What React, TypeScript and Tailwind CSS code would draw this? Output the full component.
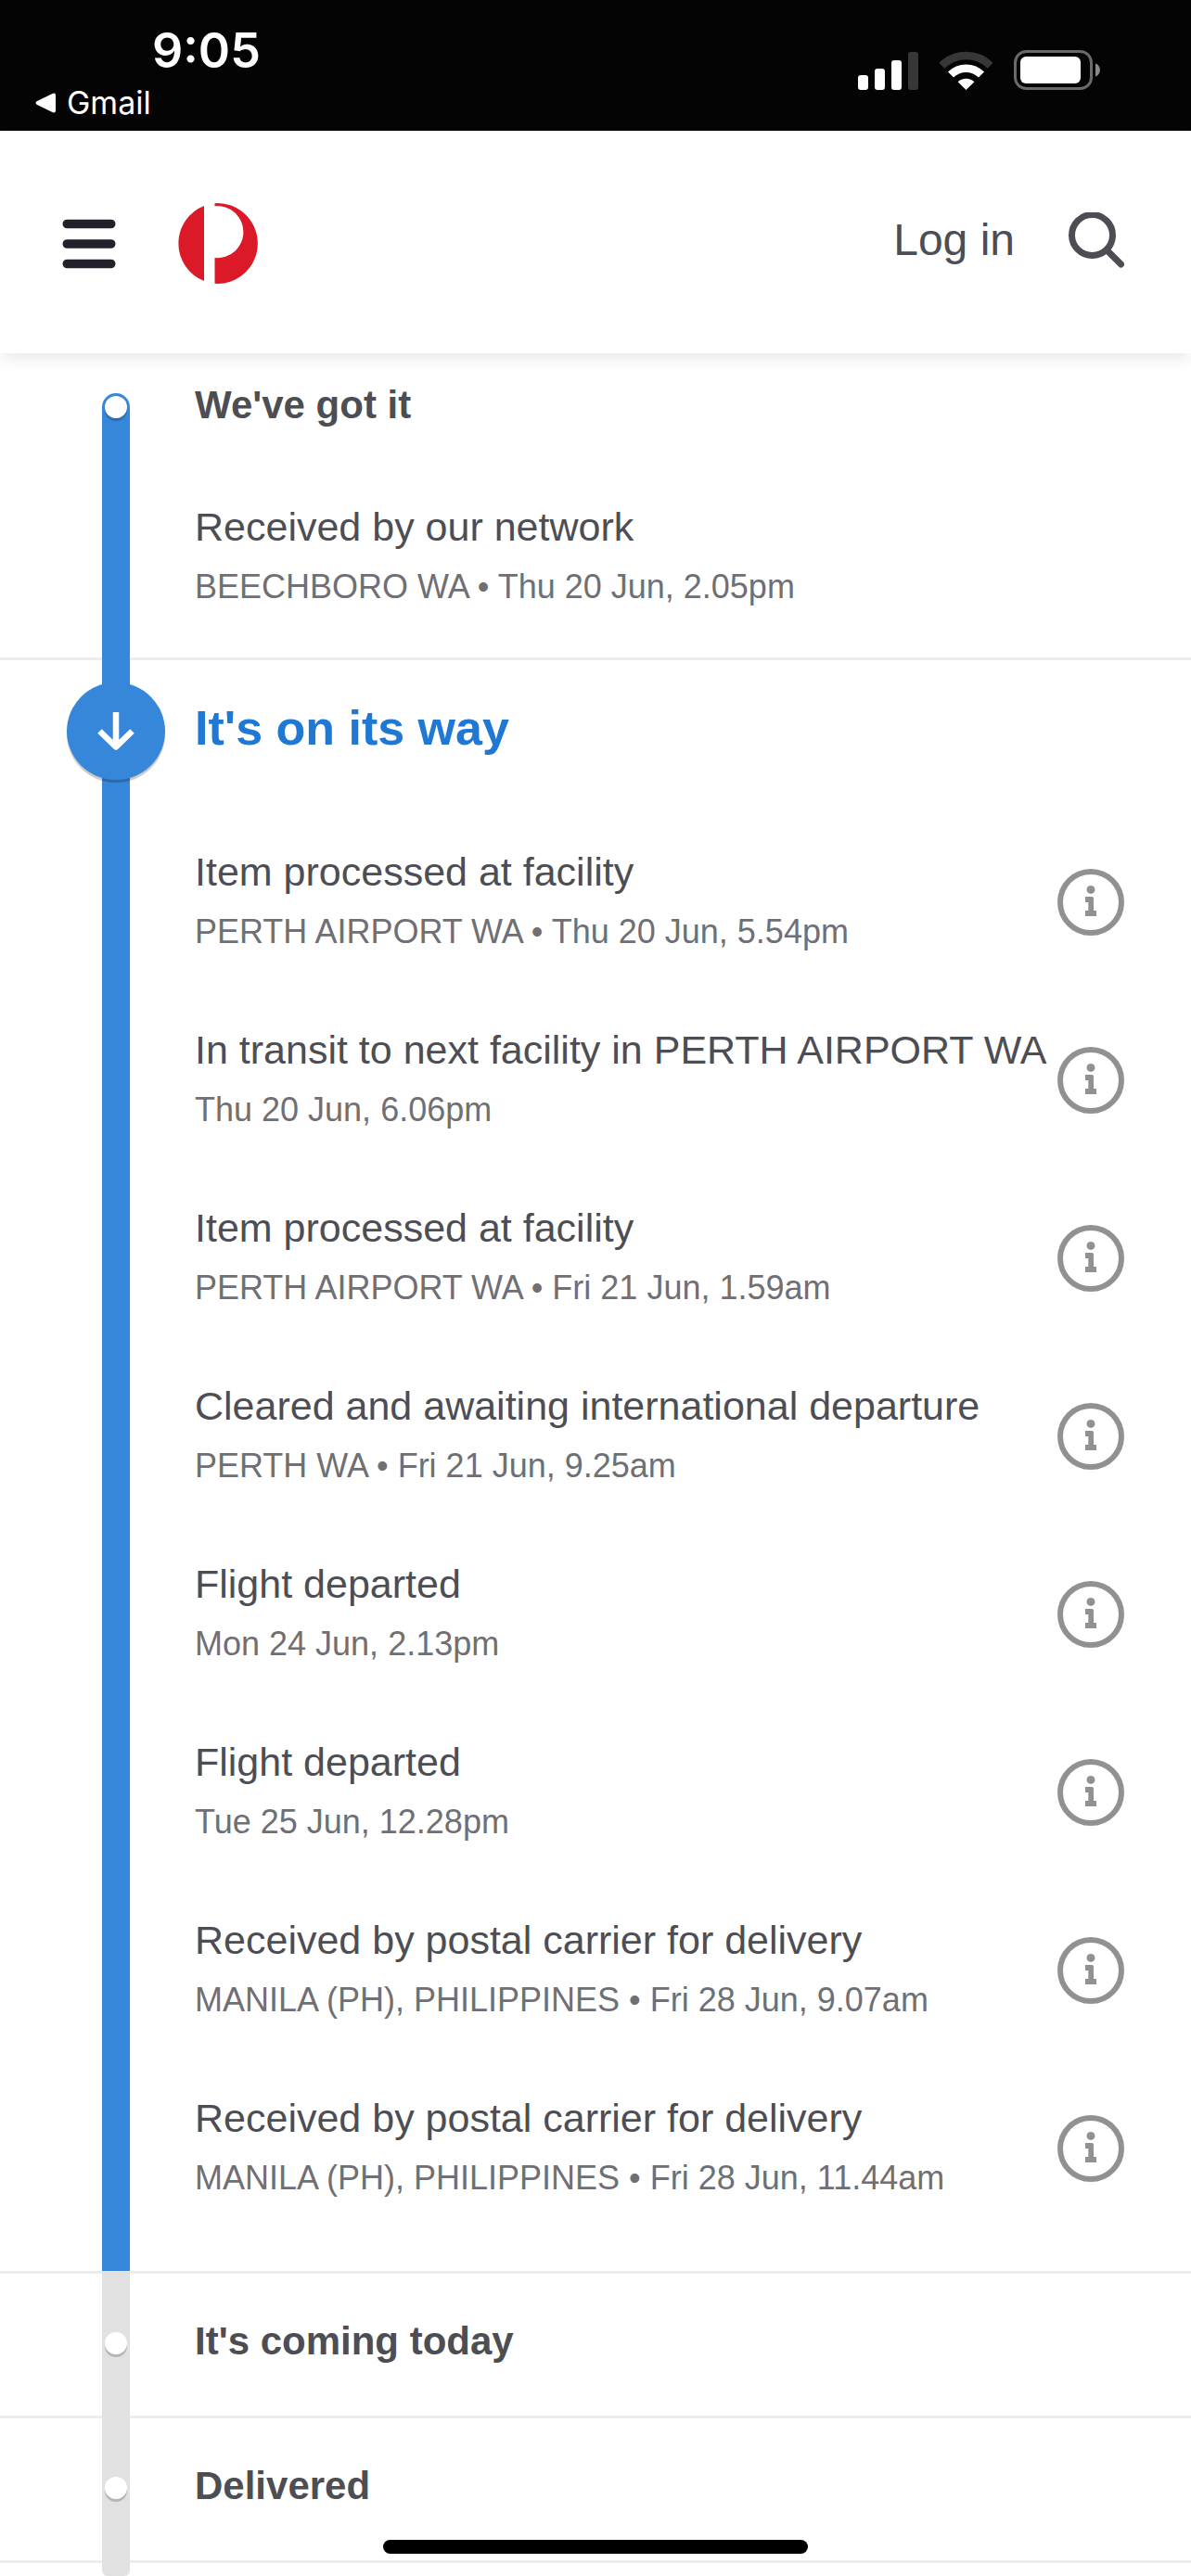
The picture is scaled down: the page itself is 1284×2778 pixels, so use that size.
import React from 'react';
import clsx from 'clsx';

interface TrackingEvent {
    title: string;
    detail: string;
}

interface StageProps {
    title: string;
    status: 'done' | 'current' | 'pending';
    events?: TrackingEvent[];
}

const received: TrackingEvent[] = [
    { title: 'Received by our network', detail: 'BEECHBORO WA • Thu 20 Jun, 2.05pm' }
];

const inTransit: TrackingEvent[] = [
    { title: 'Item processed at facility', detail: 'PERTH AIRPORT WA • Thu 20 Jun, 5.54pm' },
    { title: 'In transit to next facility in PERTH AIRPORT WA', detail: 'Thu 20 Jun, 6.06pm' },
    { title: 'Item processed at facility', detail: 'PERTH AIRPORT WA • Fri 21 Jun, 1.59am' },
    { title: 'Cleared and awaiting international departure', detail: 'PERTH WA • Fri 21 Jun, 9.25am' },
    { title: 'Flight departed', detail: 'Mon 24 Jun, 2.13pm' },
    { title: 'Flight departed', detail: 'Tue 25 Jun, 12.28pm' },
    { title: 'Received by postal carrier for delivery', detail: 'MANILA (PH), PHILIPPINES • Fri 28 Jun, 9.07am' },
    { title: 'Received by postal carrier for delivery', detail: 'MANILA (PH), PHILIPPINES • Fri 28 Jun, 11.44am' }
];

const InfoIcon = () => (
    <svg width="72" height="72" viewBox="0 0 72 72" aria-hidden="true">
        <circle cx="36" cy="36" r="33" fill="none" stroke="#919193" strokeWidth="6" />
        <circle cx="36" cy="22.4" r="4.5" fill="#919193" />
        <path d="M30 30h7a2 2 0 0 1 2 2v13h3v6H30v-6h3.3v-9H30z" fill="#919193" />
    </svg>
);

const Logo = () => (
    <svg width="87" height="87" viewBox="0 0 87 87" fill="#dc1928" aria-hidden="true">
        <path d="M28 3A43.5 43.5 0 0 0 28 84z" />
        <path d="M39.5 .2A43.4 43.4 0 1 1 39.5 86.8V59A28 28 0 1 0 39.5 3.3z" />
    </svg>
);

const StatusIcons = () => (
    <div className="flex items-center gap-[23px]">
        <svg width="65" height="42" viewBox="0 0 65 42" fill="#fff" aria-hidden="true">
            <rect y="26" width="11" height="16" rx="3" />
            <rect x="18" y="19" width="11" height="23" rx="3" />
            <rect x="36" y="10" width="11" height="32" rx="3" />
            <rect x="54" y="1" width="11" height="41" rx="3" fill="#373737" />
        </svg>
        <svg width="57" height="42" viewBox="0 0 57 42" fill="none" strokeWidth="8.5" aria-hidden="true">
            <path d="M2.3 15.8A37 37 0 0 1 54.7 15.8" stroke="#373737" />
            <path d="M12 25.5A23.3 23.3 0 0 1 45 25.5" stroke="#fff" />
            <path d="M28.5 42 19.6 33.2A13 13 0 0 1 37.4 33.2z" fill="#fff" stroke="none" />
        </svg>
        <svg width="94" height="43" viewBox="0 0 94 43" aria-hidden="true">
            <rect x="1.5" y="1.5" width="82" height="40" rx="12" fill="none" stroke="#6a6a6a" strokeWidth="3" />
            <rect x="7" y="7" width="65" height="29" rx="6" fill="#fff" />
            <path d="M88 14.5c6.5 2 6.5 12 0 14z" fill="#8a8a8a" />
        </svg>
    </div>
);

const StatusBar = () => (
    <div className="flex h-[141px] items-start justify-between bg-[#040404] pt-6 pr-[97px] pl-[38px] font-['Inter',sans-serif] text-white">
        <div>
            <div className="pl-[126px] text-[52px] leading-[62px] font-semibold">9:05</div>
            <button type="button" className="mt-1 flex items-center gap-3 text-[34px] leading-[42px]">
                <svg width="22" height="22" viewBox="0 0 22 22" fill="#fff" aria-hidden="true">
                    <path d="M19 .8 2 9Q-1 11 2 13l17 8.2q3 .8 3-2V2.8Q22 0 19 .8z" />
                </svg>
                Gmail
            </button>
        </div>
        <div className="pt-[30px]">
            <StatusIcons />
        </div>
    </div>
);

const Header = () => (
    <header className="relative z-10 flex h-60 items-center justify-between bg-white pr-[72px] pl-[67px] shadow-[0_8px_16px_-2px_rgba(0,0,0,0.09)]">
        <div className="flex items-center gap-[67px] pt-[3px]">
            <button type="button" aria-label="Menu">
                <svg width="58" height="54" viewBox="0 0 58 54" stroke="#21212b" strokeWidth="9.6" strokeLinecap="round" aria-hidden="true">
                    <path d="M5.3 5.5h47.4M5.3 27h47.4M5.3 48.5h47.4" />
                </svg>
            </button>
            <a href="#" aria-label="Home">
                <Logo />
            </a>
        </div>
        <div className="flex items-center gap-[58px] pb-1">
            <a href="#" className="text-[48px] leading-[60px]">Log in</a>
            <button type="button" aria-label="Search">
                <svg width="60" height="60" viewBox="0 0 60 60" fill="none" stroke="#4d4e54" strokeWidth="7" strokeLinecap="round" aria-hidden="true">
                    <circle cx="25.5" cy="24.5" r="22" />
                    <path d="m42 41.5 14.5 14.5" />
                </svg>
            </button>
        </div>
    </header>
);

const Dot = () => <div className="mx-auto size-6 rounded-full bg-white shadow-[0_3px_0_rgba(0,0,0,0.2)]" />;

const EventRow: React.FC<{ event: TrackingEvent; hasInfo: boolean }> = ({ event, hasInfo }) => (
    <li className="flex items-center justify-between pt-[34px] pb-8">
        <div className="flex flex-col gap-2 pb-1">
            <p className="text-[43px] leading-[60px] whitespace-nowrap">{event.title}</p>
            <p className="text-[36px] leading-[54px] text-[#6f6f74]">{event.detail}</p>
        </div>
        {hasInfo && (
            <button type="button" aria-label={`More about ${event.title}`} className="shrink-0">
                <InfoIcon />
            </button>
        )}
    </li>
);

const Stage: React.FC<StageProps> = ({ title, status, events = [] }) => {
    const current = status === 'current';

    return (
        <li className={clsx('flex pl-[110px]', status !== 'done' && 'border-t-[3px] border-[#ededed]')}>
            {/* the rail runs over the divider of its own stage */}
            <div
                className={clsx(
                    'w-[30px] shrink-0',
                    status === 'done' && 'mt-[43px] rounded-t-full bg-[#3687d9] pt-[3px]',
                    current && '-mt-[3px] bg-[#3687d9] pt-[27px]',
                    status === 'pending' && '-mt-[3px] bg-[#e1e1e1] pt-[66px]'
                )}
            >
                {current ? (
                    <div className="-mx-[38px] flex h-[105px] items-center justify-center rounded-full bg-[#3687d9] shadow-[0_3px_1px_rgba(0,0,0,0.22)]">
                        <svg width="40" height="42" viewBox="0 0 40 42" fill="none" stroke="#fff" strokeWidth="6.5" strokeLinejoin="round" aria-hidden="true">
                            <path d="M20 0v36M2.5 20.5 20 37.5l17.5-17" />
                        </svg>
                    </div>
                ) : (
                    <Dot />
                )}
            </div>
            <div
                className={clsx(
                    'min-w-0 flex-1 pr-[72px] pl-[70px]',
                    status === 'done' && 'pt-[26px] pb-[13px]',
                    current && 'pt-6 pb-[37px]',
                    status === 'pending' && 'pt-[43px] pb-[50px]'
                )}
            >
                {current ? (
                    <h2 className="mb-[35px] flex h-[105px] items-center pb-2 text-[52px] leading-[60px] font-bold text-[#1f78d3]">
                        {title}
                    </h2>
                ) : (
                    <h2 className="text-[42px] leading-[60px] font-bold">{title}</h2>
                )}
                {events.length > 0 && (
                    <ul className={clsx(!current && 'pt-[37px]')}>
                        {events.map((event, i) => (
                            <EventRow key={i} event={event} hasInfo={current} />
                        ))}
                    </ul>
                )}
            </div>
        </li>
    );
};

const App: React.FC = () => (
    <div className="min-h-screen bg-white font-['Liberation_Sans',Arial,sans-serif] text-[#4d4e54]">
        <StatusBar />
        <Header />
        <main>
            <ol>
                <Stage title="We've got it" status="done" events={received} />
                <Stage title="It's on its way" status="current" events={inTransit} />
                <Stage title="It's coming today" status="pending" />
                <Stage title="Delivered" status="pending" />
            </ol>
            <div className="border-t-[3px] border-[#ededed] pl-[110px]">
                <div className="-mt-[3px] h-[17px] w-[30px] rounded-b-[6px] bg-[#e1e1e1]" />
            </div>
        </main>
        <div className="fixed inset-x-0 bottom-6 z-20 flex justify-center">
            <div className="h-[15px] w-[458px] rounded-full bg-black" />
        </div>
    </div>
);

export default App;
